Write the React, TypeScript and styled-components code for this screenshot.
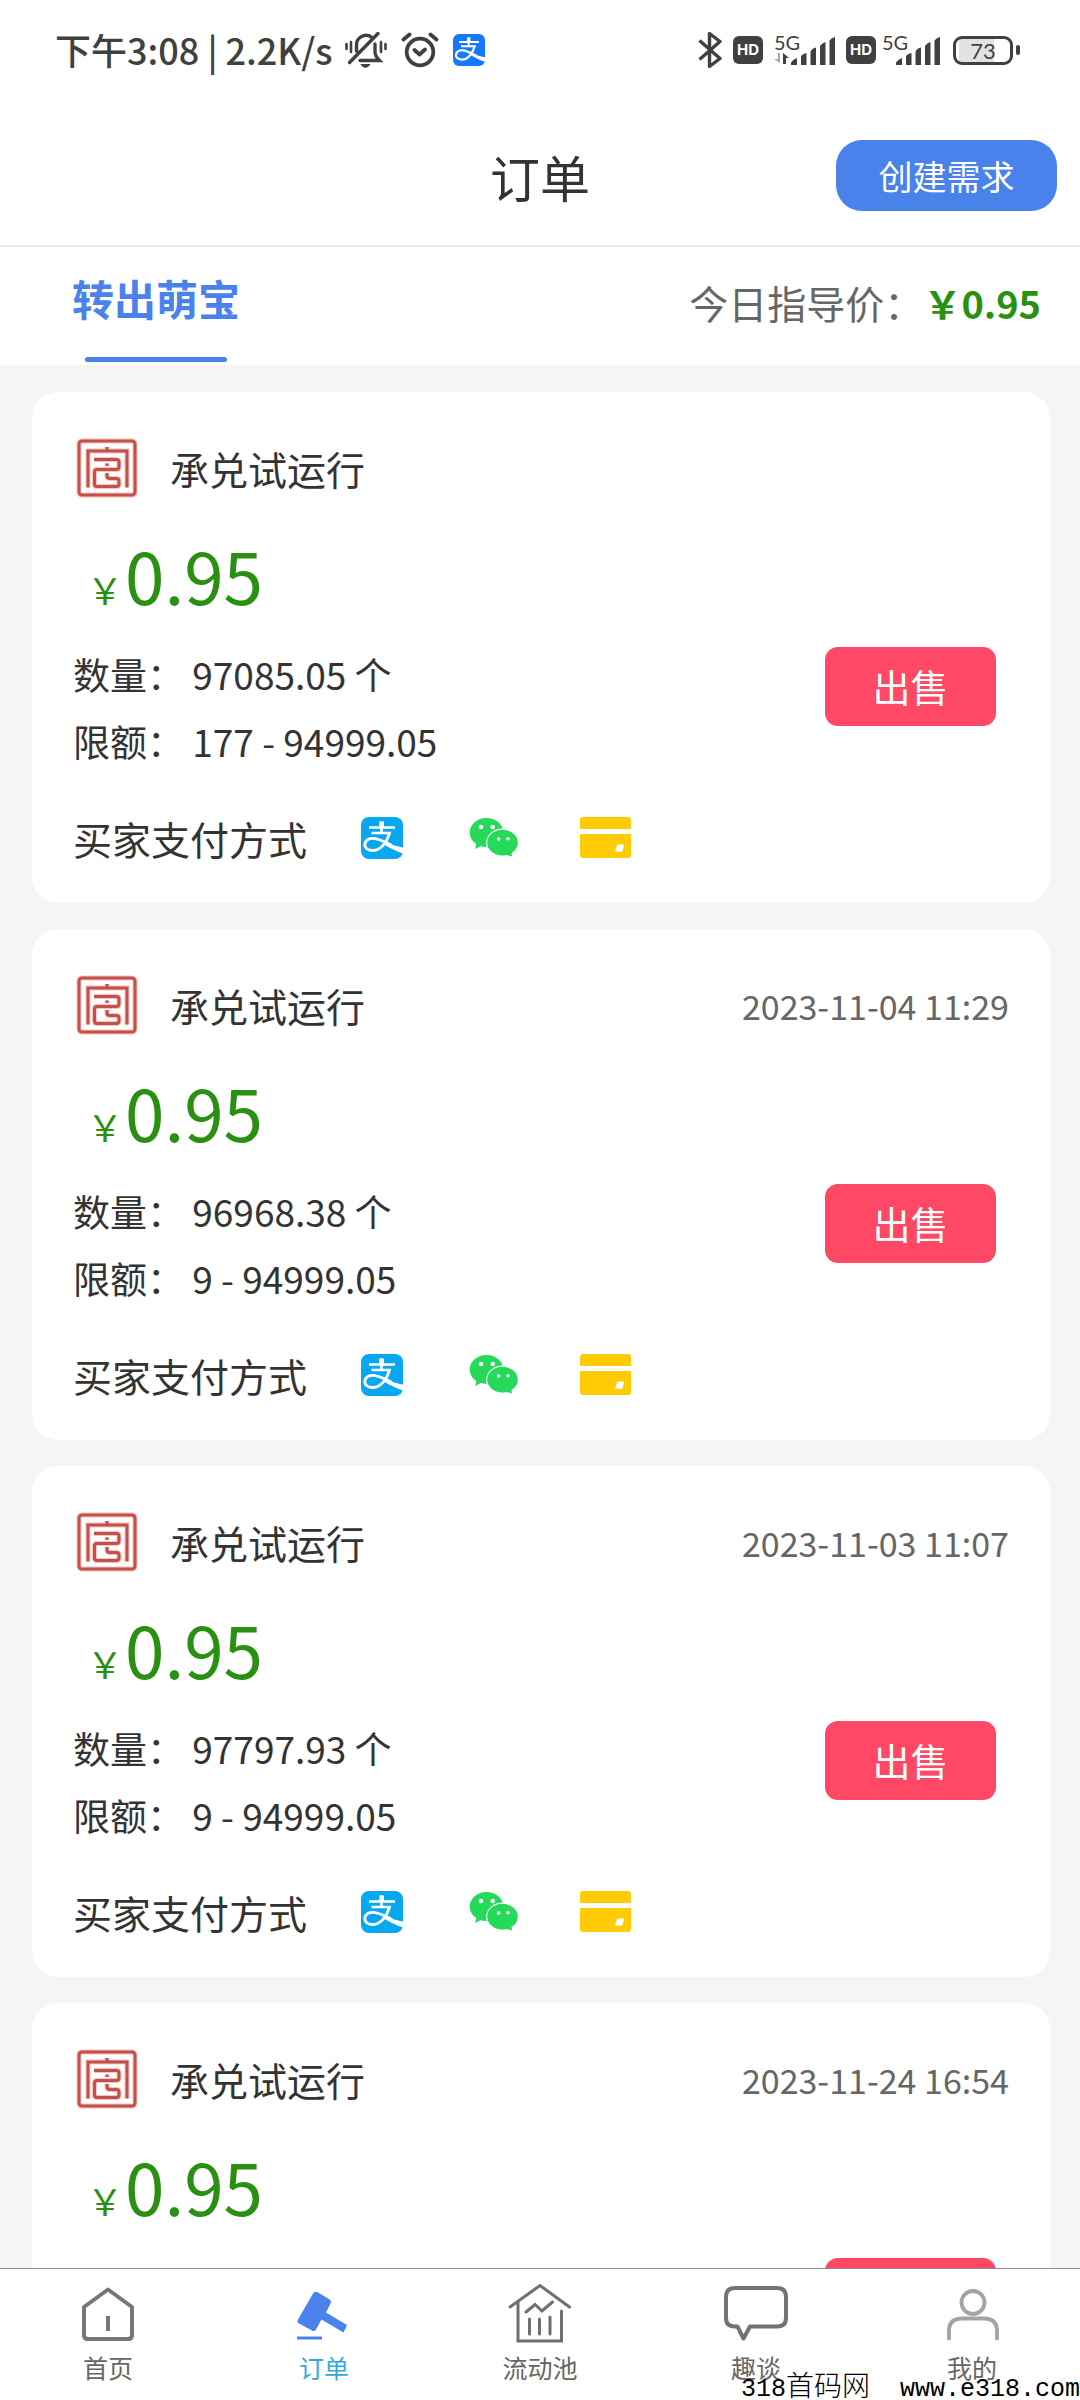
import React from "react";
import styled, { createGlobalStyle } from "styled-components";

const GlobalStyle = createGlobalStyle`
  *, *::before, *::after { box-sizing: border-box; }
  body {
    margin: 0;
    background: #fff;
    color: #333;
    font-family: "Noto Sans CJK SC", "Noto Sans", sans-serif;
  }
  button { font-family: inherit; border: 0; padding: 0; cursor: pointer; }
  h1, h2, p { margin: 0; font-weight: 400; }
  svg { display: block; flex: none; }
`;

const Screen = styled.div`
  position: relative;
  display: flex;
  flex-direction: column;
  height: 100vh;
  overflow: hidden;
`;

/* ---------- status bar ---------- */

const StatusBar = styled.div`
  flex: none;
  display: flex;
  justify-content: space-between;
  align-items: center;
  height: 100px;
  padding: 0 60px 0 55px;
  color: #404040;
`;

const StatusGroup = styled.div<{ $gap: number }>`
  display: flex;
  align-items: center;
  gap: ${(p) => p.$gap}px;
`;

const Clock = styled.span`
  margin-right: -2px;
  padding-bottom: 3px;
  font-size: 36px;
  font-weight: 500;
  line-height: 48px;
  white-space: pre;
`;

const HdBadge = styled.span`
  display: flex;
  align-items: center;
  justify-content: center;
  width: 30px;
  height: 28px;
  border-radius: 6px;
  background: #404040;
  color: #fff;
  font: 700 15px/28px Inter, sans-serif;
`;

const Signal = styled.span<{ $width: number }>`
  position: relative;
  display: flex;
  justify-content: flex-end;
  width: ${(p) => p.$width}px;
  height: 32px;
`;

const Network = styled.span`
  position: absolute;
  left: 0;
  top: 0;
  font: 400 20px/16px Lato, sans-serif;
`;

const Battery = styled.span`
  display: flex;
  align-items: center;
  gap: 3px;
  margin-left: 2px;

  &::after {
    content: "";
    width: 4px;
    height: 10px;
    border-radius: 2px;
    background: #404040;
  }
`;

const BatteryBody = styled.span`
  display: block;
  width: 60px;
  height: 29px;
  border: 3px solid #404040;
  border-radius: 9px;
  background: linear-gradient(to right, #fff 3px, #e2e2e2 3px, #e2e2e2 38px, #fff 38px);
  font: 400 22px/23px Lato, sans-serif;
  text-align: center;
`;

/* ---------- header ---------- */

const Header = styled.header`
  flex: none;
  display: grid;
  grid-template-columns: 1fr auto 1fr;
  align-items: center;
  height: 147px;
  padding: 6px 23px 0;
  border-bottom: 2px solid #e8e8e8;
`;

const Title = styled.h1`
  grid-column: 2;
  font-size: 50px;
  line-height: 72px;
`;

const CreateButton = styled.button`
  justify-self: end;
  width: 221px;
  height: 71px;
  border-radius: 26px;
  background: #4a82ec;
  color: #fff;
  font-size: 34px;
  line-height: 71px;
`;

const TabBar = styled.div`
  flex: none;
  display: flex;
  justify-content: space-between;
  align-items: flex-start;
  height: 118px;
  padding: 18px 39px 0 72px;
`;

const Tab = styled.button`
  display: flex;
  flex-direction: column;
  align-items: center;
  gap: 26px;
  background: none;
  color: #4a82ec;
  font-size: 42px;
  font-weight: 700;
  line-height: 66px;

  &::after {
    content: "";
    width: 142px;
    height: 5px;
    border-radius: 3px;
    background: #4a82ec;
  }
`;

const GuidePrice = styled.p`
  padding-top: 4px;
  color: #666;
  font-size: 39px;
  line-height: 66px;

  strong { color: #2a9012; font-size: 38px; font-weight: 700; }
`;

/* ---------- order list ---------- */

const OrderList = styled.main`
  flex: 1;
  min-height: 0;
  display: flex;
  flex-direction: column;
  gap: 26px;
  padding: 27px 30px 26px 32px;
  background: #f5f5f5;
  overflow-y: auto;
  scrollbar-width: none;
`;

const Card = styled.article`
  flex: none;
  padding: 42px 41px 33px;
  border-radius: 26px;
  background: #fff;
`;

const CardHead = styled.div`
  display: flex;
  align-items: center;
  gap: 29px;
  height: 68px;
`;

const Seller = styled.h2`
  font-size: 39px;
  line-height: 60px;
`;

const Posted = styled.time`
  margin-left: auto;
  padding-top: 2px;
  color: #666;
  font-size: 34px;
  line-height: 60px;
`;

const Price = styled.p`
  margin-top: 32px;
  padding-left: 14px;
  color: #2a9012;
  font-size: 71px;
  line-height: 80px;

  small { margin-right: 2px; font-size: 36px; line-height: 36px; }
`;

const Details = styled.div`
  display: flex;
  justify-content: space-between;
  align-items: flex-start;
  margin-top: 27px;
  padding-right: 13px;
`;

const Fact = styled.p`
  font-size: 37px;
  line-height: 67px;
`;

const SellButton = styled.button`
  width: 171px;
  height: 79px;
  margin-top: 6px;
  padding-bottom: 2px;
  border-radius: 13px;
  background: #ff4766;
  color: #fff;
  font-size: 38px;
  line-height: 77px;
`;

const Payments = styled.div`
  display: flex;
  align-items: center;
  gap: 60px;
  margin-top: 31px;
  font-size: 39px;
  line-height: 64px;
`;

const PaymentLabel = styled.span`
  margin-right: -11px;
`;

const PaymentSlot = styled.span`
  display: flex;
  justify-content: center;
  width: 52px;
`;

/* ---------- bottom navigation ---------- */

const NavBar = styled.nav`
  flex: none;
  display: grid;
  grid-template-columns: repeat(5, 1fr);
  height: 132px;
  padding-top: 13px;
  border-top: 1px solid #8f8f8f;
  background: #fff;
`;

const NavLink = styled.a<{ $active: boolean }>`
  display: flex;
  flex-direction: column;
  align-items: center;
  color: ${(p) => (p.$active ? "#35a8dd" : "#666")};
  font-size: 25px;
  line-height: 42px;
  text-decoration: none;
`;

const Watermark = styled.div`
  position: absolute;
  right: 0;
  bottom: 0;
  color: #000;
  font: 400 25px/20px "Liberation Mono", "Noto Sans CJK SC", monospace;
  white-space: pre;

  span { font-family: "Noto Sans CJK SC", sans-serif; font-size: 28px; font-weight: 300; }
`;

/* ---------- icons ---------- */

const AlipayIcon = ({ size, color }: { size: number; color: string }) => (
  <svg width={size} height={size} viewBox="0 0 42 42" role="img" aria-label="支付宝">
    <rect width="42" height="42" rx="8" fill={color} />
    <path d="M8 10.500H34M10.500 16H30M20.500 4.500V16" fill="none" stroke="#fff" strokeWidth="2.600" />
    <path d="M18.300 4.500h4.600v6h-4.600z" fill="#fff" />
    <path
      d="M28.500 15.500C26.500 24 20 34 11.500 33.500C6 33.200 3.600 30.500 3.800 27.500C4.100 23 8.500 21 13 21.400C19 22 25 26 31 28.500"
      fill="none"
      stroke="#fff"
      strokeWidth="2.900"
    />
    <path d="M22 24.500C29 27.500 36 29.500 42 30.500V36.500C35.500 34.500 29 31 22 27z" fill="#fff" />
  </svg>
);

const WechatIcon = () => (
  <svg width="52" height="46" viewBox="128 24 52 46" role="img" aria-label="微信">
    <g fill="#25d959">
      <ellipse cx="146.500" cy="41.500" rx="16.800" ry="14.500" />
      <path d="M137 51l-2 7 8-4z" />
      <ellipse cx="162.500" cy="51.700" rx="15.800" ry="13.500" stroke="#fff" strokeWidth="1.200" />
      <path d="M165 63.500l7 2-1-6z" />
      <ellipse cx="162.500" cy="51.700" rx="14.800" ry="12.500" />
    </g>
    <g fill="#fff">
      <circle cx="141" cy="36" r="2.300" />
      <circle cx="152.700" cy="36" r="2.300" />
      <circle cx="158.600" cy="48" r="1.800" />
      <circle cx="168" cy="47.700" r="1.800" />
    </g>
  </svg>
);

const BankCardIcon = () => (
  <svg width="52" height="42" viewBox="0 0 52 42" role="img" aria-label="银行卡">
    <path d="M0 12V3a3 3 0 0 1 3-3h45a3 3 0 0 1 3 3v9zM0 17h51v21a3 3 0 0 1-3 3H3a3 3 0 0 1-3-3z" fill="#ffcb05" />
    <path d="M37 28.500q.4-1 1.500-1h4.500q1.200 0 .9 1.200l-1.200 4.800q-.3 1-1.400 1.200h-5q-1.500 0-1.100-1.200z" fill="#fff" />
  </svg>
);

const SealArt = () => (
  <>
    <rect x="13" y="15" width="56" height="54" rx="3" />
    <path d="M22 61.500V25H61V61.500M41 21V25M28 33.500H50.500Q53 33.500 53 36V41Q53 43.500 50.500 43.500H31Q28.500 43.500 28.500 46V58Q28.500 60.500 31 60.500H50.500Q53 60.500 53 58V55Q53 52.500 50.500 52.500H44Q41 52.500 41 50V47M41 37.500V40" />
  </>
);

const SealIcon = () => (
  <svg width="68" height="68" viewBox="7 8 68 68" fill="none" aria-hidden="true">
    <g stroke="#f6c4be" strokeWidth="5"><SealArt /></g>
    <g stroke="#c4504b" strokeWidth="3"><SealArt /></g>
  </svg>
);

const MutedBellIcon = () => (
  <svg width="42" height="38" viewBox="0 0 42 38" fill="none" stroke="#404040" strokeWidth="3.400" strokeLinecap="round" aria-hidden="true">
    <path d="M11.500 20V14a9.500 9.500 0 0 1 16-7M30 13V21q0 4 4.500 8.500H15M4.500 31.500L33 2.500M11.500 16V20" />
    <path d="M1.500 13V18M6 11V21M36 11V21M40.500 13V18" strokeWidth="2.600" />
    <path d="M15.500 33h10q-2 3.800-5 3.800t-5-3.800z" fill="#404040" stroke="none" />
  </svg>
);

const AlarmIcon = () => (
  <svg width="38" height="36" viewBox="0 0 38 36" fill="none" stroke="#404040" strokeWidth="3.800" strokeLinecap="round" strokeLinejoin="round" aria-hidden="true">
    <circle cx="19" cy="20" r="13.300" />
    <path d="M13.500 18L18.500 22.500L24 17.500M2.500 7.500L8.500 2.500M35.500 7.500L29.500 2.500" />
  </svg>
);

const BluetoothIcon = () => (
  <svg width="24" height="38" viewBox="0 0 24 38" fill="none" stroke="#404040" strokeWidth="3.400" strokeLinejoin="round" aria-hidden="true">
    <path d="M1.500 9.500L22 27.500L11.500 35.500V2.500L22 10.500L1.500 28.500" />
  </svg>
);

const BarsIcon = () => (
  <svg width="44" height="32" viewBox="0 0 44 32" fill="#404040" aria-hidden="true">
    <path d="M0 28.500Q2 25 6 24V31H0zM10 22Q12 19.500 15.500 19V31H10zM19.500 17.500Q21.500 14 25 13.500V31H19.500zM29 12Q31 9 34.500 8V31H29zM38.500 6.500Q40.500 3.500 44 3V31H38.500z" />
  </svg>
);

const TrafficArrows = styled.svg`
  position: absolute;
  left: 0;
  bottom: 1px;
`;

const navDrawings: Record<string, React.ReactNode> = {
  home: (
    <g stroke="#777" strokeWidth="4" strokeLinejoin="round">
      <path d="M32 7.500L8 25V53Q8 57 12 57H52Q56 57 56 53V25z" />
      <path d="M32 34V49" />
    </g>
  ),
  orders: (
    <g fill="#4a82ec">
      <path d="M21 11.500Q23 8.500 26 10.500L37 17Q40 19 38.500 21.500L34 30.500L55 43L51.500 50.500L29.500 37.500L24 47.500Q22.500 50 20 48.500L7 41.500Q4.500 40 6 37.500z" />
      <path d="M5 54.500H30V57.500H5z" />
    </g>
  ),
  pool: (
    <g stroke="#707070" strokeWidth="3">
      <path d="M2 25L32 3.500L61.500 25M10 20V59H53.500V29M18 30L27 22.500L34 29L44.500 20M21.500 37V52M31.500 37V52M42 35V52" strokeLinecap="round" />
    </g>
  ),
  chat: (
    <path stroke="#737373" strokeWidth="4" strokeLinejoin="round" d="M11 6H53Q62 6 62 15V36Q62 44.500 53 44.500H26L19.500 56.500L13.500 44.500H11Q2 44.500 2 36V15Q2 6 11 6z" />
  ),
  mine: (
    <g stroke="#a3a3a3" strokeWidth="3.800">
      <circle cx="33" cy="20.500" r="11.500" />
      <path d="M9 58V49Q9 36.500 22 36.500H44Q57 36.500 57 49V58" />
    </g>
  ),
};

/* ---------- data ---------- */

interface Order {
  posted?: string;
  amount: string;
  limit: string;
}

const orders: Order[] = [
  { amount: "97085.05", limit: "177 - 94999.05" },
  { posted: "2023-11-04 11:29", amount: "96968.38", limit: "9 - 94999.05" },
  { posted: "2023-11-03 11:07", amount: "97797.93", limit: "9 - 94999.05" },
  { posted: "2023-11-24 16:54", amount: "97797.93", limit: "9 - 94999.05" },
];

const navItems = [
  { id: "home", label: "首页" },
  { id: "orders", label: "订单" },
  { id: "pool", label: "流动池" },
  { id: "chat", label: "趣谈" },
  { id: "mine", label: "我的" },
];

const OrderCard = ({ order }: { order: Order }) => (
  <Card>
    <CardHead>
      <SealIcon />
      <Seller>承兑试运行</Seller>
      {order.posted && <Posted>{order.posted}</Posted>}
    </CardHead>
    <Price>
      <small>￥</small>0.95
    </Price>
    <Details>
      <div>
        <Fact>数量： {order.amount} 个</Fact>
        <Fact>限额： {order.limit}</Fact>
      </div>
      <SellButton type="button">出售</SellButton>
    </Details>
    <Payments>
      <PaymentLabel>买家支付方式</PaymentLabel>
      <PaymentSlot><AlipayIcon size={42} color="#08a8f0" /></PaymentSlot>
      <PaymentSlot><WechatIcon /></PaymentSlot>
      <PaymentSlot><BankCardIcon /></PaymentSlot>
    </Payments>
  </Card>
);

export default function App() {
  return (
    <Screen>
      <GlobalStyle />
      <StatusBar>
        <StatusGroup $gap={14}>
          <Clock>下午3:08 | 2.2K/s</Clock>
          <MutedBellIcon />
          <AlarmIcon />
          <AlipayIcon size={32} color="#1677ff" />
        </StatusGroup>
        <StatusGroup $gap={11}>
          <BluetoothIcon />
          <HdBadge>HD</HdBadge>
          <Signal $width={61}>
            <Network>5G</Network>
            <TrafficArrows width="16" height="12" viewBox="0 0 16 12" aria-hidden="true">
              <path d="M6 0V10L0 6H4V0z" fill="#aaa" />
              <path d="M9 11V0L15 5H12V11z" fill="#404040" />
            </TrafficArrows>
            <BarsIcon />
          </Signal>
          <StatusGroup $gap={6}>
            <HdBadge>HD</HdBadge>
            <Signal $width={58}>
              <Network>5G</Network>
              <BarsIcon />
            </Signal>
          </StatusGroup>
          <Battery>
            <BatteryBody>73</BatteryBody>
          </Battery>
        </StatusGroup>
      </StatusBar>

      <Header>
        <Title>订单</Title>
        <CreateButton type="button">创建需求</CreateButton>
      </Header>

      <TabBar>
        <Tab type="button">转出萌宝</Tab>
        <GuidePrice>
          今日指导价：<strong>￥0.95</strong>
        </GuidePrice>
      </TabBar>

      <OrderList>
        {orders.map((order, i) => (
          <OrderCard key={i} order={order} />
        ))}
      </OrderList>

      <NavBar>
        {navItems.map((item) => (
          <NavLink key={item.id} href={`#${item.id}`} $active={item.id === "orders"}>
            <svg width="64" height="64" viewBox="0 0 64 64" fill="none" aria-hidden="true">
              {navDrawings[item.id]}
            </svg>
            {item.label}
          </NavLink>
        ))}
      </NavBar>

      <Watermark>
        318<span>首码网</span>{"  "}www.e318.com
      </Watermark>
    </Screen>
  );
}
